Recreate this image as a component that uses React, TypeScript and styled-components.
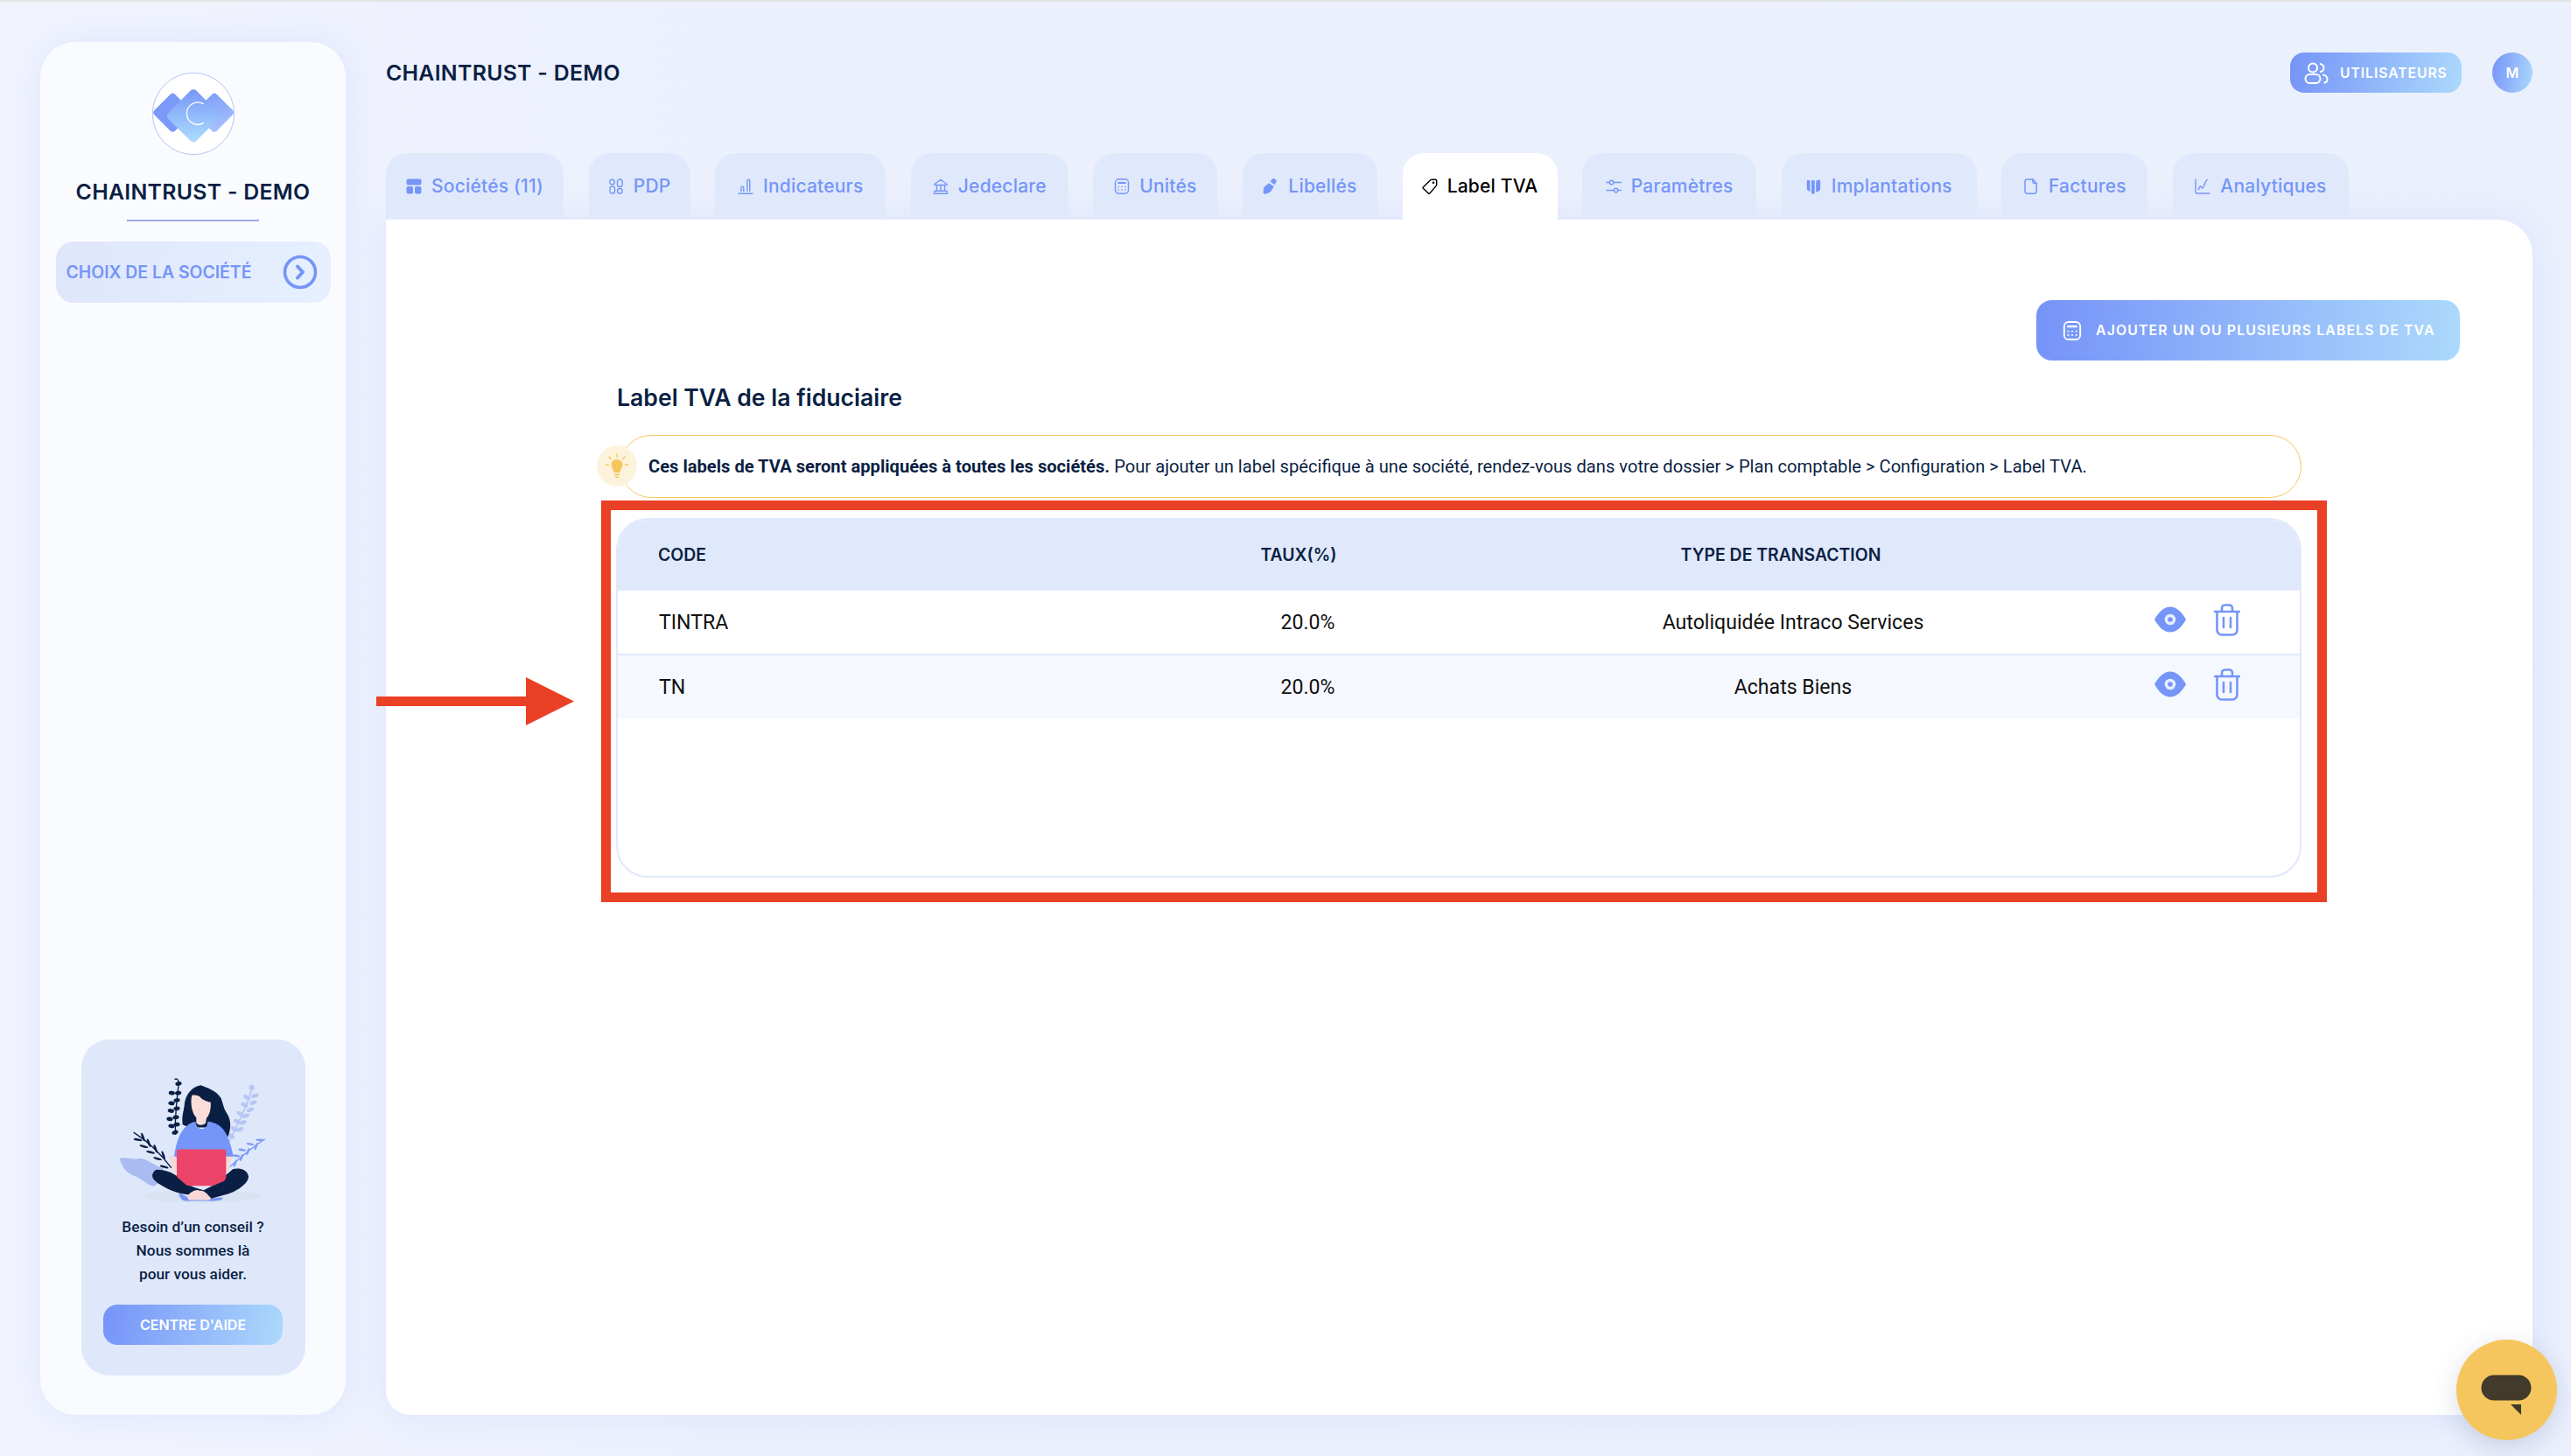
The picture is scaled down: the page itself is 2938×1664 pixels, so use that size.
import React from 'react';
import styled, { createGlobalStyle } from 'styled-components';

const Global = createGlobalStyle`
  html, body { margin: 0; padding: 0; }
  body { background: #edf1fd; font-family: "Inter", "Liberation Sans", sans-serif; }
  * { box-sizing: border-box; }
`;

const BLUE = '#7595f8';
const NAVY = '#0b1f44';
const GRADIENT = 'linear-gradient(100deg, #7593f8 0%, #acd9fc 100%)';

const TopEdge = styled.div`
  height: 2px;
  background: #e4e4e4;
`;

const Page = styled.div`
  display: flex;
  gap: 46px;
  height: 1662px;
  padding: 46px 44px 47px 46px;
  background: linear-gradient(90deg, #f1f4fe 0%, #ecf0fd 30%, #ebf0fd 100%);
`;

const Sidebar = styled.aside`
  width: 349px;
  display: flex;
  flex-direction: column;
  align-items: center;
  padding: 35px 0 45px;
  border-radius: 40px;
  background: #fafbff;
  box-shadow: 0 0 40px rgba(117, 149, 248, 0.14);
`;

const LogoRing = styled.svg`
  width: 94px;
  height: 94px;
  display: block;
`;

const SideTitle = styled.h2`
  margin: 24px 0 0;
  font-size: 24.8px;
  line-height: 36px;
  font-weight: 600;
  color: ${NAVY};
  white-space: nowrap;
  letter-spacing: 0.3px;
`;

const SideRule = styled.div`
  width: 151px;
  height: 2px;
  margin-top: 14px;
  background: #99aceb;
`;

const CompanyPicker = styled.button`
  width: 314px;
  height: 70px;
  margin-top: 23px;
  padding: 0 15px 0 12px;
  display: flex;
  align-items: center;
  justify-content: space-between;
  border: 0;
  border-radius: 20px;
  background: linear-gradient(100deg, #dfe6fb 0%, #e6f0ff 100%);
  color: ${BLUE};
  font: 600 19.4px "Inter", sans-serif;
  white-space: nowrap;
`;

const HelpCard = styled.div`
  width: 256px;
  height: 384px;
  margin-top: auto;
  padding-top: 42px;
  display: flex;
  flex-direction: column;
  align-items: center;
  border-radius: 32px;
  background: #dfe8fb;
`;

const HelpArt = styled.svg`
  width: 170px;
  height: 147px;
  display: block;
`;

const HelpText = styled.p`
  margin: 12px 0 0;
  font: 500 17.3px/27px "Roboto", sans-serif;
  color: ${NAVY};
  text-align: center;
  white-space: pre-line;
`;

const HelpButton = styled.button`
  width: 205px;
  height: 46px;
  margin-top: 21px;
  border: 0;
  border-radius: 16px;
  background: ${GRADIENT};
  color: #fff;
  font: 600 16px "Inter", sans-serif;
  white-space: nowrap;
`;

const Main = styled.main`
  flex: 1;
  min-width: 0;
  display: flex;
  flex-direction: column;
`;

const Header = styled.header`
  height: 127px;
  padding-top: 12px;
  display: flex;
  align-items: flex-start;
  justify-content: space-between;
`;

const PageTitle = styled.h1`
  margin: 0;
  font-size: 24.8px;
  line-height: 46px;
  font-weight: 600;
  color: ${NAVY};
  letter-spacing: 0.3px;
`;

const HeaderActions = styled.div`
  display: flex;
  align-items: center;
  gap: 35px;
`;

const UsersButton = styled.button`
  width: 196px;
  height: 46px;
  padding: 0 0 0 16px;
  display: flex;
  align-items: center;
  gap: 13px;
  border: 0;
  border-radius: 16px;
  background: ${GRADIENT};
  color: #fff;
  font: 600 15.6px "Inter", sans-serif;
  letter-spacing: 1px;
`;

const Avatar = styled.div`
  width: 46px;
  height: 46px;
  display: flex;
  align-items: center;
  justify-content: center;
  border-radius: 50%;
  background: ${GRADIENT};
  color: #fff;
  font: 600 16px "Inter", sans-serif;
`;

const TabBar = styled.nav`
  position: relative;
  z-index: 1;
  display: flex;
  gap: 28.6px;
  height: 76px;
`;

const Tab = styled.div<{ $active?: boolean; $width: number }>`
  width: ${(p) => p.$width}px;
  display: flex;
  align-items: center;
  justify-content: center;
  gap: 11px;
  padding-bottom: 1px;
  border-radius: 24px 24px 0 0;
  background: ${(p) => (p.$active ? '#fff' : '#e0e9fb')};
  color: ${(p) => (p.$active ? '#000' : BLUE)};
  font-size: 21px;
  font-weight: 550;
  letter-spacing: 0.2px;
  white-space: nowrap;
`;

const TabGlyph = styled.svg`
  width: 18px;
  height: 18px;
  flex: none;
  display: block;
`;

const Card = styled.section`
  position: relative;
  flex: 1;
  padding: 92px 83px 0 0;
  display: flex;
  flex-direction: column;
  border-radius: 0 40px 40px 28px;
  background: #fff;
  box-shadow: 0 0 40px rgba(117, 149, 248, 0.14);
`;

const AddRow = styled.div`
  display: flex;
  justify-content: flex-end;
`;

const AddButton = styled.button`
  width: 484px;
  height: 69px;
  padding-left: 30px;
  display: flex;
  align-items: center;
  gap: 16px;
  border: 0;
  border-radius: 18px;
  background: linear-gradient(95deg, #7593f8 0%, #acd9fc 100%);
  color: #fff;
  font: 600 15.85px "Inter", sans-serif;
  letter-spacing: 1.1px;
  white-space: nowrap;
`;

const Section = styled.div`
  margin: 26px 181px 0 263px;
  display: flex;
  flex-direction: column;
`;

const SectionTitle = styled.h3`
  margin: 0 0 0 1px;
  font-size: 26.6px;
  line-height: 32px;
  font-weight: 600;
  color: ${NAVY};
`;

const Notice = styled.div`
  position: relative;
  height: 72px;
  margin: 27px 0 0 4px;
  padding: 0 0 0 32px;
  display: flex;
  align-items: center;
  border: 1.5px solid #f5c760;
  border-radius: 36px;
  font: 400 20.15px "Roboto", sans-serif;
  color: ${NAVY};
  white-space: nowrap;
`;

const NoticeStrong = styled.strong`
  font-weight: 700;
  margin-right: 5px;
`;

const BulbBadge = styled.div`
  position: absolute;
  left: -27px;
  top: 11px;
  width: 46px;
  height: 47px;
  display: flex;
  align-items: center;
  justify-content: center;
  border-radius: 50%;
  background: #fdf3dc;
`;

const Table = styled.div`
  height: 411px;
  margin-top: 23px;
  border: 2px solid #e0e9fc;
  border-radius: 36px;
  overflow: hidden;
`;

const HeadRow = styled.div`
  height: 81px;
  padding: 0 0 1px 46px;
  display: grid;
  grid-template-columns: 632px 200px 902px;
  align-items: center;
  background: #e0e9fb;
  color: ${NAVY};
  font-size: 19.4px;
  font-weight: 600;
`;

const HeadCell = styled.div<{ $center?: boolean }>`
  text-align: ${(p) => (p.$center ? 'center' : 'left')};
`;

const BodyRow = styled.div<{ $shaded?: boolean }>`
  height: ${(p) => (p.$shaded ? 72 : 74)}px;
  padding-left: 47px;
  display: grid;
  grid-template-columns: 578px 327px 782px 1fr;
  align-items: center;
  background: ${(p) => (p.$shaded ? '#f5f8ff' : '#fff')};
  border-bottom: ${(p) => (p.$shaded ? '0' : '2px solid #e0e9fc')};
  font: 400 23.1px "Roboto", sans-serif;
  color: #111;
`;

const BodyCell = styled.div<{ $center?: boolean }>`
  text-align: ${(p) => (p.$center ? 'center' : 'left')};
`;

const RowActions = styled.div`
  display: flex;
  align-items: center;
  gap: 32px;
  padding: 0 0 6px 22px;
`;

const RedFrame = styled.div`
  position: absolute;
  left: 246px;
  top: 321px;
  width: 1972px;
  height: 459px;
  border: 11px solid #ea4025;
  pointer-events: none;
`;

const RedArrow = styled.svg`
  position: absolute;
  left: -11px;
  top: 523px;
  width: 226px;
  height: 55px;
`;

const ChatBubble = styled.div`
  position: fixed;
  left: 2806.5px;
  top: 1530.5px;
  width: 115px;
  height: 115px;
  padding-top: 14px;
  border-radius: 50%;
  background: #f6c65e;
  box-shadow: 0 8px 30px rgba(60, 80, 120, 0.2);
  display: flex;
  align-items: center;
  justify-content: center;
`;

const Stroke = { fill: 'none', stroke: BLUE, strokeWidth: 1.4, strokeLinecap: 'round', strokeLinejoin: 'round' } as const;

const tabs = [
  {
    label: 'Sociétés (11)',
    width: 203,
    icon: (
      <g fill={BLUE}>
        <rect x="0.5" y="0.5" width="17" height="7" rx="2" />
        <rect x="0.5" y="9" width="7.5" height="8.5" rx="2" />
        <rect x="10" y="9" width="7.5" height="8.5" rx="2" />
      </g>
    ),
  },
  {
    label: 'PDP',
    width: 116,
    icon: (
      <g {...Stroke}>
        <circle cx="4.5" cy="4" r="2.8" />
        <rect x="10.5" y="1" width="5.6" height="8.5" rx="2.8" />
        <rect x="2" y="9" width="5.6" height="8" rx="2.8" />
        <circle cx="13.3" cy="14.3" r="2.8" />
      </g>
    ),
  },
  {
    label: 'Indicateurs',
    width: 195,
    icon: (
      <g {...Stroke}>
        <path d="M1 17.3h16" />
        <path d="M4 14.5v-4a1.4 1.4 0 0 1 2.8 0v4" />
        <path d="M11 14.5V2.5a1.4 1.4 0 0 1 2.8 0v12" />
      </g>
    ),
  },
  {
    label: 'Jedeclare',
    width: 180,
    icon: (
      <g {...Stroke}>
        <path d="M2 6.5 9 1.2l7 5.3v1H2z" />
        <path d="M4.5 8v6M9 8v6M13.5 8v6" />
        <path d="M2.5 14.2h13a1 1 0 0 1 1 1v2h-15v-2a1 1 0 0 1 1-1z" />
      </g>
    ),
  },
  {
    label: 'Unités',
    width: 142,
    icon: (
      <g {...Stroke}>
        <rect x="1.5" y="0.8" width="15" height="16.4" rx="4" />
        <path d="M5 5h8" strokeWidth="2" />
        <path d="M5.2 9.5h.1M9 9.5h.1M12.8 9.5h.1M5.2 13h.1M9 13h.1M12.8 13h.1" strokeWidth="1.6" />
      </g>
    ),
  },
  {
    label: 'Libellés',
    width: 154,
    icon: (
      <g fill={BLUE}>
        <path d="M7 5.2 12.7 9 9 15.2 3 18l-2.6-1.6L1.4 10z" />
        <path d="M8.6 3.6 11 .6c.8-.8 2-.6 3.2.1 1.2.8 1.8 2 1.2 3L13.6 7.3z" />
      </g>
    ),
  },
  {
    label: 'Label TVA',
    width: 177,
    active: true,
    icon: (
      <g fill="none" stroke="#000" strokeWidth="1.4" strokeLinejoin="round" strokeLinecap="round">
        <path d="M11 1.2h4.4c.8 0 1.3.6 1.3 1.3v4.7a1.5 1.5 0 0 1-.3.9l-7.6 8.9a1 1 0 0 1-1.5.1L1.3 11.3a1 1 0 0 1 0-1.4l8.6-8.3c.3-.3.7-.4 1.1-.4z" />
        <circle cx="13" cy="4.7" r="0.6" />
      </g>
    ),
  },
  {
    label: 'Paramètres',
    width: 199,
    icon: (
      <g {...Stroke}>
        <path d="M0.8 4.5h3.2M9.2 4.5h8" />
        <circle cx="6.6" cy="4.5" r="2.2" />
        <path d="M0.8 13.5h8M14.2 13.5h3" />
        <circle cx="11.6" cy="13.5" r="2.2" />
      </g>
    ),
  },
  {
    label: 'Implantations',
    width: 223,
    icon: (
      <g fill={BLUE}>
        <path d="M0.8 3.5c0-1.5 1-2.2 2.2-1.6l1.5.7v12.5l-1.7-.8c-1.2-.5-2-1.5-2-2.8z" />
        <path d="M6 2.5c1-1 2.7-1 3.7 0v14.4c-1 .8-2.7.8-3.7 0z" />
        <path d="M11.2 2.6l2-.9c1.6-.6 3-.3 3 1.6v8.4c0 1.2-.8 2.3-2 2.8l-3 1.3z" />
      </g>
    ),
  },
  {
    label: 'Factures',
    width: 167,
    icon: (
      <g {...Stroke} strokeWidth="1.5">
        <path d="M4.8 1h6.2l4.2 4.5v9a2.8 2.8 0 0 1-2.8 2.8H4.8A2.8 2.8 0 0 1 2 14.5V3.8A2.8 2.8 0 0 1 4.8 1z" />
        <path d="M11 1v2.5a2 2 0 0 0 2 2h2.2" />
      </g>
    ),
  },
  {
    label: 'Analytiques',
    width: 201,
    icon: (
      <g {...Stroke}>
        <path d="M1 1v14a2 2 0 0 0 2 2h14" />
        <path d="M4.5 12.5c.6-2 1.3-3.5 2.3-3.5s1 2 2 2 1.8-3 2.8-5.5S13.5 2 14.5 1.3" />
      </g>
    ),
  },
];

const rows = [
  { code: 'TINTRA', rate: '20.0%', type: 'Autoliquidée Intraco Services' },
  { code: 'TN', rate: '20.0%', type: 'Achats Biens' },
];

const Logo = () => (
  <LogoRing viewBox="519 249 282 282">
    <defs>
      <linearGradient id="logoRight" x1="0" y1="0" x2="1" y2="0.6">
        <stop offset="0" stopColor="#7f9ff8" />
        <stop offset="1" stopColor="#a4bdfb" />
      </linearGradient>
      <linearGradient id="logoMid" x1="0" y1="0" x2="1" y2="1">
        <stop offset="0" stopColor="#7595f8" />
        <stop offset="0.9" stopColor="#a8d8fc" />
        <stop offset="1" stopColor="#c6cffb" />
      </linearGradient>
    </defs>
    <circle cx="660" cy="390" r="140" fill="#fff" stroke="#8fa6ee" strokeWidth="2" />
    <rect x="539" y="336" width="100" height="100" rx="12" transform="rotate(45 589 386)" fill="#7a99f8" />
    <rect x="682" y="336" width="100" height="100" rx="12" transform="rotate(45 732 386)" fill="url(#logoRight)" />
    <rect x="592" y="329" width="136" height="136" rx="14" transform="rotate(45 660 397)" fill="url(#logoMid)" />
    <path d="M694 356a38 38 0 1 0 0 66" fill="none" stroke="#fff" strokeWidth="4" strokeLinecap="round" />
  </LogoRing>
);

const leafPairs = (pts: number[][], fill: string, rx: number, ry: number) =>
  pts.map(([x, y, rot], i) => <ellipse key={i} cx={x} cy={y} rx={rx} ry={ry} fill={fill} transform={`rotate(${rot} ${x} ${y})`} />);

const Illustration = () => (
  <HelpArt viewBox="230 180 510 440">
    <ellipse cx="513" cy="591" rx="203" ry="22" fill="#d9e2f2" />
    <path d="M232 462c18-7 45 4 63 0 25-4 45 18 85 33l10 35-40 27c-30-7-40-27-70-37-25-10-40-30-48-58z" fill="#a9bbf0" />
    <path d="M685 218c-5 40-40 110-80 190" fill="none" stroke="#b6c6f3" strokeWidth="5" />
    <circle cx="685" cy="218" r="9" fill="#b6c6f3" />
    {leafPairs(
      [[696, 246, -20], [668, 252, 30], [690, 270, -20], [660, 278, 30], [680, 295, -20], [645, 308, 30], [665, 315, -20], [635, 335, 30], [655, 338, -20], [625, 360, 30], [645, 362, -20], [615, 385, 30]],
      '#b6c6f3', 13, 7,
    )}
    <path d="M730 395c-40 25-80 60-120 95" fill="none" stroke="#7f9cf8" strokeWidth="4" />
    {leafPairs(
      [[712, 398, 0], [700, 420, -70], [680, 412, 10], [672, 438, -70], [652, 432, 10], [650, 458, -70], [632, 452, 10], [628, 478, -70]],
      '#7f9cf8', 13, 4,
    )}
    <path d="M280 372c40 25 90 70 130 122" fill="none" stroke={NAVY} strokeWidth="4" />
    {leafPairs(
      [[295, 397, 10], [312, 388, 70], [315, 420, 15], [332, 408, 70], [338, 440, 15], [355, 428, 70], [362, 462, 15], [382, 450, 70], [385, 490, 15]],
      NAVY, 15, 4,
    )}
    <path d="M420 190c12-6 16 8 14 20-6 50-14 120-10 170" fill="none" stroke={NAVY} strokeWidth="4" />
    {leafPairs(
      [[434, 205, -10], [433, 237, -10], [411, 237, 10], [428, 262, -10], [410, 272, 10], [428, 290, -10], [408, 298, 10], [425, 320, -10], [404, 326, 10], [428, 345, -10], [410, 350, 10], [422, 372, -20]],
      NAVY, 11, 7,
    )}
    <path d="M510 210c20 8 55 18 70 45 8 22 8 35 22 55 14 25 12 55-2 85l-55-40H470l-22-10c-4-30 4-45 6-65 2-30 18-62 56-70z" fill={NAVY} />
    <path d="M480 245c10-2 25 0 30 8 10 10 28 15 34 15 2 20-2 42-14 55l-3 18c-10 8-24 8-32-2v-18c-14-12-22-50-15-76z" fill="#fadcd8" />
    <path d="M492 335c4 34 42 34 42 0 40 4 70 25 88 120l-40 10-164-5c10-70 30-115 74-125z" fill={BLUE} />
    <path d="M402 455h24l8 60-18-5zM596 455h22l-14 50-16 10z" fill="#f8d8d6" />
    <path d="M436 575c20 20 50 30 70 26l80-6c0 10-15 12-40 12h-90c-12-2-24-18-20-32z" fill="#7595f8" />
    <path d="M360 500c30 0 60 10 100 45 20 15 40 20 60 25l40-20 60-52c20-5 50 0 54 25 0 25-40 50-70 60l-55 15c-12 3-30-2-40-12-40 2-80-4-120-25-20-10-45-25-45-40 2-14 10-20 16-21z" fill={NAVY} />
    <path d="M466 590c8-14 30-25 40-18 15-4 30 14 38 24 4 6-6 10-20 8h-50c-8 0-10-8-8-14z" fill="#f8d8d6" />
    <path d="M435 430h155c5 0 7 3 7 7v88c0 6-4 12-10 15l-30 13c-4 2-8 2-14 2h-70c-6 0-12-2-16-6l-24-20c-4-3-5-6-5-10v-82c0-4 3-7 7-7z" fill="#ec4468" />
  </HelpArt>
);

const EyeIcon = () => (
  <svg width="36" height="30" viewBox="0 0 36 30" style={{ display: 'block' }}>
    <path d="M0 15C5 6 11 .5 18 .5S31 6 36 15c-5 9-11 14.5-18 14.5S5 24 0 15z" fill={BLUE} />
    <circle cx="18" cy="15" r="6.3" fill="#e8eefe" />
    <circle cx="18" cy="15" r="2.8" fill={BLUE} />
  </svg>
);

const TrashIcon = () => (
  <svg width="30" height="37" viewBox="0 0 30 37" fill="none" stroke={BLUE} strokeWidth="2.6" strokeLinecap="round" strokeLinejoin="round" style={{ display: 'block' }}>
    <path d="M1 9h28" />
    <path d="M9 8V5a3.5 3.5 0 0 1 3.5-3.5h5A3.5 3.5 0 0 1 21 5v3" />
    <path d="M3.5 9v21a5.500 5.500 0 0 0 5.500 5.500h12a5.500 5.500 0 0 0 5.500-5.500V9" />
    <path d="M11 16v11M19 16v11" />
  </svg>
);

const App: React.FC = () => (
  <>
    <Global />
    <TopEdge />
    <Page>
      <Sidebar>
        <Logo />
        <SideTitle>CHAINTRUST - DEMO</SideTitle>
        <SideRule />
        <CompanyPicker>
          CHOIX DE LA SOCIÉTÉ
          <svg width="40" height="40" viewBox="0 0 40 40" fill="none" stroke={BLUE}>
            <circle cx="20" cy="20" r="17.5" strokeWidth="3.6" />
            <path d="M17 13.5l6 6.500-6 6.500" strokeWidth="4" strokeLinecap="round" strokeLinejoin="round" />
          </svg>
        </CompanyPicker>
        <HelpCard>
          <Illustration />
          <HelpText>{"Besoin d’un conseil ?\nNous sommes là\npour vous aider."}</HelpText>
          <HelpButton>CENTRE D'AIDE</HelpButton>
        </HelpCard>
      </Sidebar>
      <Main>
        <Header>
          <PageTitle>CHAINTRUST - DEMO</PageTitle>
          <HeaderActions>
            <UsersButton>
              <svg width="28" height="25" viewBox="0 0 28 25" fill="none" stroke="#fff" strokeWidth="2" style={{ flex: 'none' }}>
                <circle cx="10" cy="6.5" r="5" />
                <path d="M18 2a4.5 4.5 0 0 1 0 9" />
                <rect x="1.5" y="14" width="17" height="10" rx="5" />
                <path d="M21 14.5c3.5 0 5.500 2.500 5.500 5s-1.500 4-4 4" />
              </svg>
              UTILISATEURS
            </UsersButton>
            <Avatar>M</Avatar>
          </HeaderActions>
        </Header>
        <TabBar>
          {tabs.map((tab) => (
            <Tab key={tab.label} $width={tab.width} $active={tab.active}>
              <TabGlyph viewBox="0 0 18 18">{tab.icon}</TabGlyph>
              {tab.label}
            </Tab>
          ))}
        </TabBar>
        <Card>
          <AddRow>
            <AddButton>
              <svg width="22" height="24" viewBox="0 0 18 18" fill="none" stroke="#fff" strokeWidth="1.5" strokeLinecap="round" style={{ flex: 'none' }}>
                <rect x="1.5" y="0.8" width="15" height="16.4" rx="4" />
                <path d="M5 5h8" strokeWidth="2" />
                <path d="M5.2 9.5h.1M9 9.5h.1M12.8 9.5h.1M5.2 13h.1M9 13h.1M12.8 13h.1" strokeWidth="1.6" />
              </svg>
              AJOUTER UN OU PLUSIEURS LABELS DE TVA
            </AddButton>
          </AddRow>
          <Section>
            <SectionTitle>Label TVA de la fiduciaire</SectionTitle>
            <Notice>
              <BulbBadge>
                <svg width="28" height="30" viewBox="0 0 28 30" fill="#f6c65e">
                  <path d="M14 7c4 0 6.5 2.8 6.5 6 0 3.5-2.5 5-3 9h-7c-.5-4-3-5.5-3-9 0-3.2 2.5-6 6.5-6z" />
                  <path d="M11 23.5h6v1.8h-6zM12 26.5h4v1.8h-4z" />
                  <path d="M14 1v3M5 4l2 2.5M23 4l-2 2.5M1.5 13h3M23.5 13h3" stroke="#f6c65e" strokeWidth="1.4" strokeLinecap="round" fill="none" />
                </svg>
              </BulbBadge>
              <NoticeStrong>Ces labels de TVA seront appliquées à toutes les sociétés.</NoticeStrong>
              Pour ajouter un label spécifique à une société, rendez-vous dans votre dossier &gt; Plan comptable &gt; Configuration &gt; Label TVA.
            </Notice>
            <Table>
              <HeadRow>
                <HeadCell>CODE</HeadCell>
                <HeadCell $center>TAUX(%)</HeadCell>
                <HeadCell $center>TYPE DE TRANSACTION</HeadCell>
              </HeadRow>
              {rows.map((row, i) => (
                <BodyRow key={row.code} $shaded={i === 1}>
                  <BodyCell>{row.code}</BodyCell>
                  <BodyCell $center>{row.rate}</BodyCell>
                  <BodyCell $center>{row.type}</BodyCell>
                  <RowActions>
                    <EyeIcon />
                    <TrashIcon />
                  </RowActions>
                </BodyRow>
              ))}
            </Table>
          </Section>
          <RedFrame />
          <RedArrow viewBox="0 0 226 55">
            <path d="M0 22h171V0l55 27.5L171 55V33H0z" fill="#ea4025" />
          </RedArrow>
        </Card>
      </Main>
    </Page>
    <ChatBubble>
      <svg width="58" height="48" viewBox="0 0 58 48">
        <rect x="0.5" y="0.5" width="57" height="29" rx="14.5" fill="#423a2a" />
        <path d="M34 34h12v12z" fill="#423a2a" />
      </svg>
    </ChatBubble>
  </>
);

export default App;
